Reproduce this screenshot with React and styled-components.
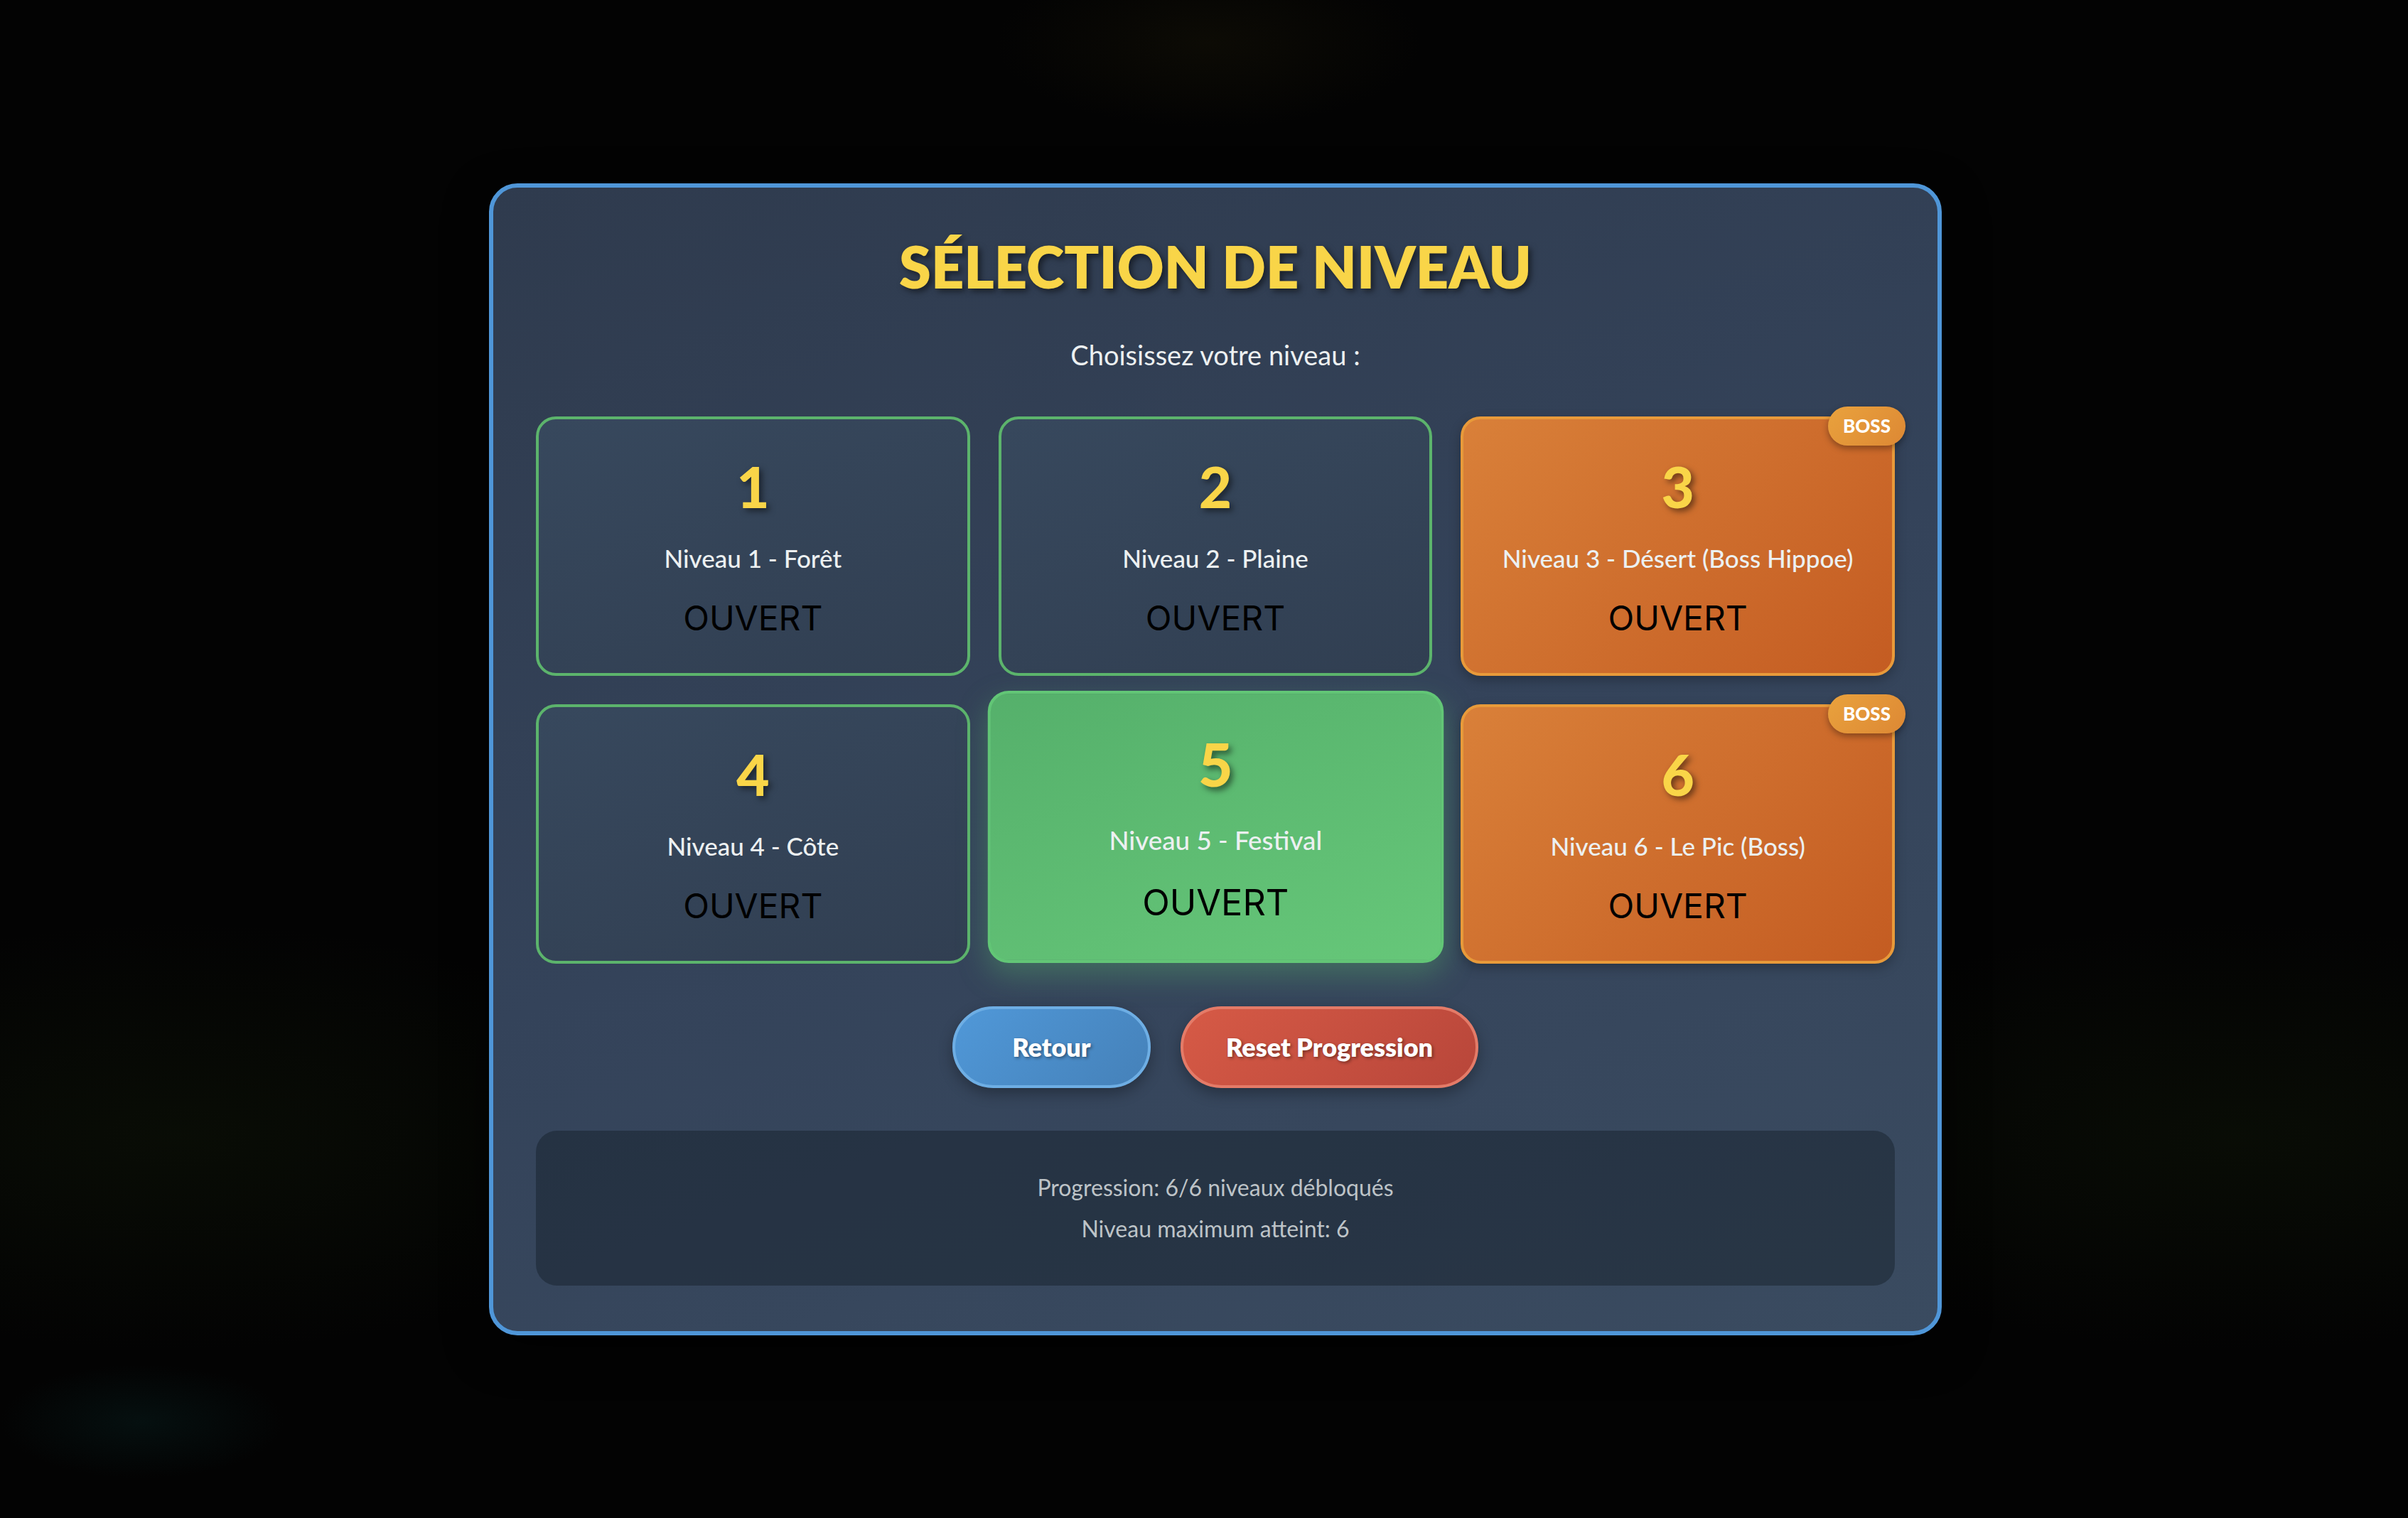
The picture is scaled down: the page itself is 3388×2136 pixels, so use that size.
import React from 'react'
import styled, { createGlobalStyle } from 'styled-components'

const GlobalStyle = createGlobalStyle`
  html, body {
    margin: 0;
    padding: 0;
    background: #030303;
  }
  * {
    box-sizing: border-box;
  }
`

const Page = styled.div`
  width: 3388px;
  height: 2136px;
  overflow: hidden;
  display: flex;
  align-items: center;
  justify-content: center;
  padding-left: 32px;
  background:
    radial-gradient(ellipse 300px 120px at 1700px 60px, rgba(40, 34, 10, 0.25), transparent),
    radial-gradient(ellipse 700px 300px at 250px 1600px, rgba(20, 30, 10, 0.35), transparent),
    radial-gradient(ellipse 700px 300px at 3150px 1600px, rgba(20, 30, 10, 0.35), transparent),
    radial-gradient(ellipse 200px 80px at 200px 2000px, rgba(10, 40, 40, 0.35), transparent),
    #030303;
  font-family: Lato, "Noto Sans", sans-serif;
`

const Modal = styled.div`
  width: 2044px;
  border: 6px solid #4f96d8;
  border-radius: 40px;
  padding: 60px 60px 64px;
  background: linear-gradient(160deg, #2f3b4e 0%, #34435a 50%, #3a4b60 100%);
  box-shadow: 0 20px 60px rgba(0, 0, 0, 0.6);
  display: flex;
  flex-direction: column;
  align-items: stretch;
`

const Title = styled.h1`
  margin: 0;
  font-family: Lato, sans-serif;
  font-weight: 800;
  font-size: 81px;
  line-height: 101px;
  text-align: center;
  color: #f9d548;
  text-shadow: 4px 4px 8px rgba(0, 0, 0, 0.5);
`

const Subtitle = styled.p`
  margin: 51px 0 64px;
  font-size: 38px;
  line-height: 46px;
  text-align: center;
  color: #ecf0f1;
`

const Grid = styled.div`
  display: grid;
  grid-template-columns: repeat(3, 1fr);
  gap: 40px;
`

const variants = {
  normal: {
    bg: 'linear-gradient(160deg, #37485d, #313f52)',
    border: '#5cb46c',
    shadow: 'none',
  },
  boss: {
    bg: 'linear-gradient(135deg, #d98039, #c45c22)',
    border: '#e89a3a',
    shadow: '0 6px 16px rgba(0, 0, 0, 0.25)',
  },
  active: {
    bg: 'linear-gradient(160deg, #55b06b, #66c779)',
    border: '#62c676',
    shadow: '0 16px 40px rgba(92, 190, 110, 0.35)',
  },
}

const Card = styled.div`
  position: relative;
  height: 365px;
  padding: 6px 20px 0;
  border: 4px solid ${p => variants[p.$variant].border};
  border-radius: 28px;
  background: ${p => variants[p.$variant].bg};
  box-shadow: ${p => variants[p.$variant].shadow};
  display: flex;
  flex-direction: column;
  align-items: center;
  justify-content: center;
  transform: ${p => (p.$variant === 'active' ? 'translateY(-10px) scale(1.05)' : 'none')};
  cursor: pointer;
`

const Number = styled.div`
  font-weight: 900;
  font-size: 80px;
  line-height: 80px;
  color: #f9d548;
  text-shadow: 4px 4px 8px rgba(0, 0, 0, 0.5);
`

const Name = styled.div`
  margin-top: 42px;
  font-weight: 500;
  font-size: 35px;
  line-height: 38px;
  color: #ecf0f1;
  white-space: nowrap;
`

const Status = styled.div`
  margin-top: 37px;
  font-family: Inter, "Liberation Sans", sans-serif;
  font-size: 48px;
  line-height: 58px;
  color: #000;
`

const Badge = styled.span`
  position: absolute;
  top: -18px;
  right: -19px;
  width: 109px;
  height: 55px;
  border-radius: 28px;
  background: linear-gradient(135deg, #e9a23d, #dd8834);
  box-shadow: 0 4px 10px rgba(0, 0, 0, 0.35);
  color: #fff;
  font-weight: 900;
  font-size: 26px;
  display: flex;
  align-items: center;
  justify-content: center;
`

const ButtonRow = styled.div`
  margin: 60px 0;
  display: flex;
  justify-content: center;
  gap: 42px;
`

const buttonColors = {
  blue: { bg: 'linear-gradient(135deg, #5098d8, #4581b9)', border: '#6eaee4' },
  red: { bg: 'linear-gradient(135deg, #d65a46, #b8463a)', border: '#e47b68' },
}

const Button = styled.button`
  height: 115px;
  min-width: 279px;
  padding: 0 60px;
  border: 4px solid ${p => buttonColors[p.$color].border};
  border-radius: 60px;
  background: ${p => buttonColors[p.$color].bg};
  box-shadow: 0 8px 20px rgba(0, 0, 0, 0.3);
  color: #fff;
  font-family: Lato, sans-serif;
  font-weight: 800;
  font-size: 36px;
  text-shadow: 2px 2px 4px rgba(0, 0, 0, 0.4);
  cursor: pointer;
`

const InfoBox = styled.div`
  padding: 56px 40px;
  border-radius: 30px;
  background: rgba(10, 16, 24, 0.35);
  display: flex;
  flex-direction: column;
  gap: 10px;
  text-align: center;
`

const InfoLine = styled.p`
  margin: 0;
  font-size: 32px;
  line-height: 48px;
  color: #bdc3c7;
`

const levels = [
  { id: 1, name: 'Niveau 1 - Forêt', variant: 'normal' },
  { id: 2, name: 'Niveau 2 - Plaine', variant: 'normal' },
  { id: 3, name: 'Niveau 3 - Désert (Boss Hippoe)', variant: 'boss', boss: true },
  { id: 4, name: 'Niveau 4 - Côte', variant: 'normal' },
  { id: 5, name: 'Niveau 5 - Festival', variant: 'active' },
  { id: 6, name: 'Niveau 6 - Le Pic (Boss)', variant: 'boss', boss: true },
]

const App = () => (
  <>
    <GlobalStyle />
    <Page>
      <Modal>
        <Title>SÉLECTION DE NIVEAU</Title>
        <Subtitle>Choisissez votre niveau :</Subtitle>
        <Grid>
          {levels.map(level => (
            <Card key={level.id} $variant={level.variant}>
              {level.boss && <Badge>BOSS</Badge>}
              <Number>{level.id}</Number>
              <Name>{level.name}</Name>
              <Status>OUVERT</Status>
            </Card>
          ))}
        </Grid>
        <ButtonRow>
          <Button $color="blue">Retour</Button>
          <Button $color="red">Reset Progression</Button>
        </ButtonRow>
        <InfoBox>
          <InfoLine>Progression: 6/6 niveaux débloqués</InfoLine>
          <InfoLine>Niveau maximum atteint: 6</InfoLine>
        </InfoBox>
      </Modal>
    </Page>
  </>
)

export default App
